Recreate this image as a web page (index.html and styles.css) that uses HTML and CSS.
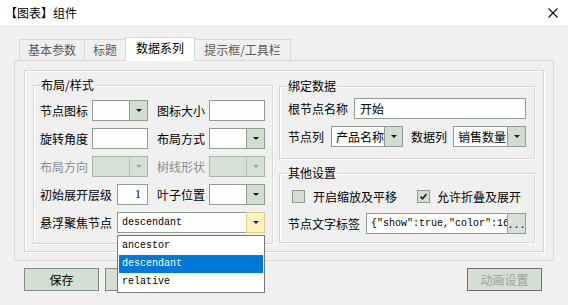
FILE: index.html
```html
<!DOCTYPE html>
<html>
<head>
    <title>【图表】组件</title>
    <link rel="stylesheet" href="styles.css">
</head>
<body>

<!-- Title Bar -->
<div class="titlebar">
    <span>【图表】组件</span>
    <svg class="close" width="10" height="10" viewBox="0 0 10 10">
        <path d="M0.5 0.5 L9.5 9.5 M9.5 0.5 L0.5 9.5" stroke="#111" stroke-width="1.1" fill="none"/>
    </svg>
</div>

<div class="main">
    <!-- Tabs -->
    <div class="tabs">
        <div class="tab t1">基本参数</div>
        <div class="tab t2">标题</div>
        <div class="tab t3 active">数据系列</div>
        <div class="tab t4">提示框/工具栏</div>
    </div>

    <div class="panel">
        <div class="inner">

            <!-- Left group -->
            <fieldset class="group group-left">
                <legend>布局/样式</legend>

                <div class="row">
                    <span class="label w52">节点图标</span>
                    <div class="combo w56"><span class="val"></span><span class="btn"><i class="arrow"></i></span></div>
                    <span class="label w52 ml9">图标大小</span>
                    <div class="input w56"></div>
                </div>

                <div class="row">
                    <span class="label w52">旋转角度</span>
                    <div class="input w56"></div>
                    <span class="label w52 ml9">布局方式</span>
                    <div class="combo w56"><span class="val"></span><span class="btn"><i class="arrow"></i></span></div>
                </div>

                <div class="row">
                    <span class="label w52 off">布局方向</span>
                    <div class="combo w56 disabled"><span class="val"></span><span class="btn"><i class="arrow"></i></span></div>
                    <span class="label w52 ml9 off">树线形状</span>
                    <div class="combo w56 disabled"><span class="val"></span><span class="btn"><i class="arrow"></i></span></div>
                </div>

                <div class="row">
                    <span class="label w77">初始展开层级</span>
                    <div class="input w31 num">1</div>
                    <span class="label w52 ml9">叶子位置</span>
                    <div class="combo w56"><span class="val"></span><span class="btn"><i class="arrow"></i></span></div>
                </div>

                <div class="row">
                    <span class="label w77">悬浮聚焦节点</span>
                    <div class="combo w148 hover">
                        <span class="val mono">descendant</span><span class="btn"><i class="arrow"></i></span>
                        <ul class="dropdown">
                            <li>ancestor</li>
                            <li class="selected">descendant</li>
                            <li>relative</li>
                        </ul>
                    </div>
                </div>
            </fieldset>

            <!-- Right column -->
            <div class="right-col">
                <fieldset class="group group-bind">
                    <legend>绑定数据</legend>
                    <div class="row">
                        <span class="label w66">根节点名称</span>
                        <div class="input w172">开始</div>
                    </div>
                    <div class="row">
                        <span class="label w43">节点列</span>
                        <div class="combo w72"><span class="val">产品名称</span><span class="btn"><i class="arrow"></i></span></div>
                        <span class="label w42 ml8">数据列</span>
                        <div class="combo w73"><span class="val">销售数量</span><span class="btn"><i class="arrow"></i></span></div>
                    </div>
                </fieldset>

                <fieldset class="group group-other">
                    <legend>其他设置</legend>
                    <div class="row">
                        <span class="check"></span>
                        <span class="label check-label">开启缩放及平移</span>
                        <span class="check checked">
                            <svg width="11" height="11" viewBox="0 0 11 11">
                                <path d="M2.5 5.5 L4.5 7.8 L8.5 3" stroke="#1a1a1a" stroke-width="1.6" fill="none"/>
                            </svg>
                        </span>
                        <span class="label check-label">允许折叠及展开</span>
                    </div>
                    <div class="row">
                        <span class="label w78">节点文字标签</span>
                        <div class="combo w160">
                            <span class="val mono">{"show":true,"color":16</span><span class="btn dots">...</span>
                        </div>
                    </div>
                </fieldset>
            </div>

        </div>
    </div>

    <!-- Bottom buttons -->
    <div class="buttons">
        <button class="button">保存</button>
        <button class="button"></button>
        <button class="button off-btn">动画设置</button>
    </div>
</div>

</body>
</html>
```

FILE: styles.css
```css
/* Global Reset */
* {
    margin: 0;
    padding: 0;
    box-sizing: border-box;
}

body {
    width: 568px;
    height: 305px;
    overflow: hidden;
    background: #f0f0f0;
    color: #000;
    font-family: "Noto Sans CJK SC", "Microsoft YaHei", sans-serif;
    font-size: 12px;
    line-height: 16px;
}

/* Title Bar */
.titlebar {
    height: 25px;
    background: #ffffff;
    display: flex;
    align-items: center;
    justify-content: space-between;
    padding: 0 10px 0 5px;
}

.close {
    display: block;
}

/* Main */
.main {
    padding: 12px 14px 0 14px;
}

/* Tabs */
.tabs {
    display: flex;
    align-items: flex-end;
    height: 23px;
    padding-left: 5px;
    position: relative;
    z-index: 1;
}

.tab {
    height: 21px;
    border: 1px solid #d9d9d9;
    border-bottom: none;
    margin-left: -1px;
    background: #f0f0f0;
    color: #5a5a5a;
    text-align: center;
    line-height: 20px;
}

.tab:first-child {
    margin-left: 0;
}

.t1 { width: 66px; }
.t2 { width: 42px; }
.t3 { width: 70px; }
.t4 { width: 97px; }

.tab.active {
    height: 24px;
    margin-bottom: -1px;
    background: #ffffff;
    color: #000;
    line-height: 19px;
}

/* Tab Panel */
.panel {
    height: 201px;
    border: 1px solid #d9d9d9;
    padding: 9px;
}

.inner {
    height: 182px;
    border: 1px solid #d6d6d6;
    box-shadow: inset 1px 1px 0 #fff, 1px 1px 0 #fff;
    padding: 6px 8px 0 8px;
    display: flex;
    gap: 6px;
}

/* Group Boxes */
.group {
    border: 1px solid #d6d6d6;
    box-shadow: inset 1px 1px 0 #fff, 1px 1px 0 #fff;
    padding: 7px 7px 9px 6px;
    min-width: 0;
}

.group legend {
    padding: 0 1px;
    line-height: 16px;
}

.group-left {
    width: 241px;
    height: 167px;
}

.right-col {
    width: 257px;
    display: flex;
    flex-direction: column;
    gap: 6px;
    padding-top: 1px;
}

.group-bind {
    height: 81px;
    padding: 4px 8px 0 8px;
}

.group-other {
    height: 78px;
    padding: 5px 8px 0 8px;
}

.group-bind legend,
.group-other legend {
    margin-left: -1px;
}

/* Rows */
.row {
    display: flex;
    align-items: center;
    height: 21px;
    margin-bottom: 7px;
}

.group-other .row {
    margin-bottom: 6px;
}

.label {
    white-space: nowrap;
    flex-shrink: 0;
}

.label.off {
    color: #8d8d8d;
}

.w31 { width: 31px; }
.w42 { width: 42px; }
.w43 { width: 43px; }
.w52 { width: 52px; }
.w56 { width: 56px; }
.w66 { width: 66px; }
.w72 { width: 72px; }
.w73 { width: 73px; }
.w77 { width: 77px; }
.w78 { width: 78px; }
.w148 { width: 148px; }
.w160 { width: 160px; }
.w172 { width: 172px; }
.ml8 { margin-left: 8px; }
.ml9 { margin-left: 9px; }

/* Inputs */
.input {
    height: 21px;
    border: 1px solid #8f9d8f;
    background: #ffffff;
    padding-left: 5px;
    line-height: 19px;
    flex-shrink: 0;
}

.input.num {
    text-align: right;
    padding-right: 6px;
    font-family: "Liberation Serif", serif;
    font-size: 12px;
}

/* Combo Box */
.combo {
    position: relative;
    height: 21px;
    display: flex;
    border: 1px solid #8f9d8f;
    background: #ffffff;
    flex-shrink: 0;
}

.combo .val {
    flex: 1;
    overflow: hidden;
    white-space: nowrap;
    padding-left: 4px;
    line-height: 19px;
}

.combo .val.mono {
    font-family: "Liberation Mono", monospace;
    font-size: 10px;
    padding-left: 4px;
}

.combo .btn {
    width: 18px;
    flex-shrink: 0;
    border-left: 1px solid #8f9d8f;
    background: #d2ddd2;
    display: flex;
    align-items: center;
    justify-content: center;
}

.arrow {
    display: block;
    width: 0;
    height: 0;
    border-left: 3px solid transparent;
    border-right: 3px solid transparent;
    border-top: 3px solid #1a1a1a;
}

.combo.disabled {
    background: #d6e0d6;
    border-color: #a9b4a9;
}

.combo.disabled .btn {
    border-left-color: #b8c2b8;
    background: #d6e0d6;
}

.combo.disabled .arrow {
    border-top-color: #a2a2a2;
}

.combo.hover .btn {
    width: 19px;
    margin: -1px -1px -1px 0;
    border: 1px solid #e3cd7c;
    background: #fdf3c4;
}

.combo .btn.dots {
    background: #d7e0d7;
    align-items: flex-end;
    font-family: "Liberation Mono", monospace;
    font-size: 10px;
    line-height: 14px;
}

/* Dropdown List */
.dropdown {
    position: absolute;
    top: 22px;
    left: -1px;
    width: 148px;
    height: 58px;
    background: #ffffff;
    border: 1px solid #767676;
    padding: 1px;
    list-style: none;
    z-index: 5;
}

.dropdown li {
    height: 18px;
    line-height: 18px;
    padding-left: 3px;
    font-family: "Liberation Mono", monospace;
    font-size: 10px;
}

.dropdown li.selected {
    background: #0078d7;
    color: #ffffff;
}

/* Checkboxes */
.check {
    width: 13px;
    height: 13px;
    border: 1px solid #8f9d8f;
    background: #d4dfd4;
    margin-left: 4px;
    display: flex;
    align-items: center;
    justify-content: center;
    flex-shrink: 0;
}

.check.checked {
    margin-left: 20px;
}

.check-label {
    margin-left: 8px;
}

.check.checked + .check-label {
    margin-left: 7px;
}

/* Bottom Buttons */
.buttons {
    display: flex;
    gap: 6px;
    padding: 7px 12px 0 10px;
}

.button {
    width: 75px;
    height: 23px;
    border: 1px solid #7f8d7f;
    background: #d4dfd4;
    font-family: "Noto Sans CJK SC", "Microsoft YaHei", sans-serif;
    font-size: 12px;
    color: #000;
}

.button.off-btn {
    margin-left: auto;
    border-color: #6e6e6e;
    color: #a39e9e;
}
```
